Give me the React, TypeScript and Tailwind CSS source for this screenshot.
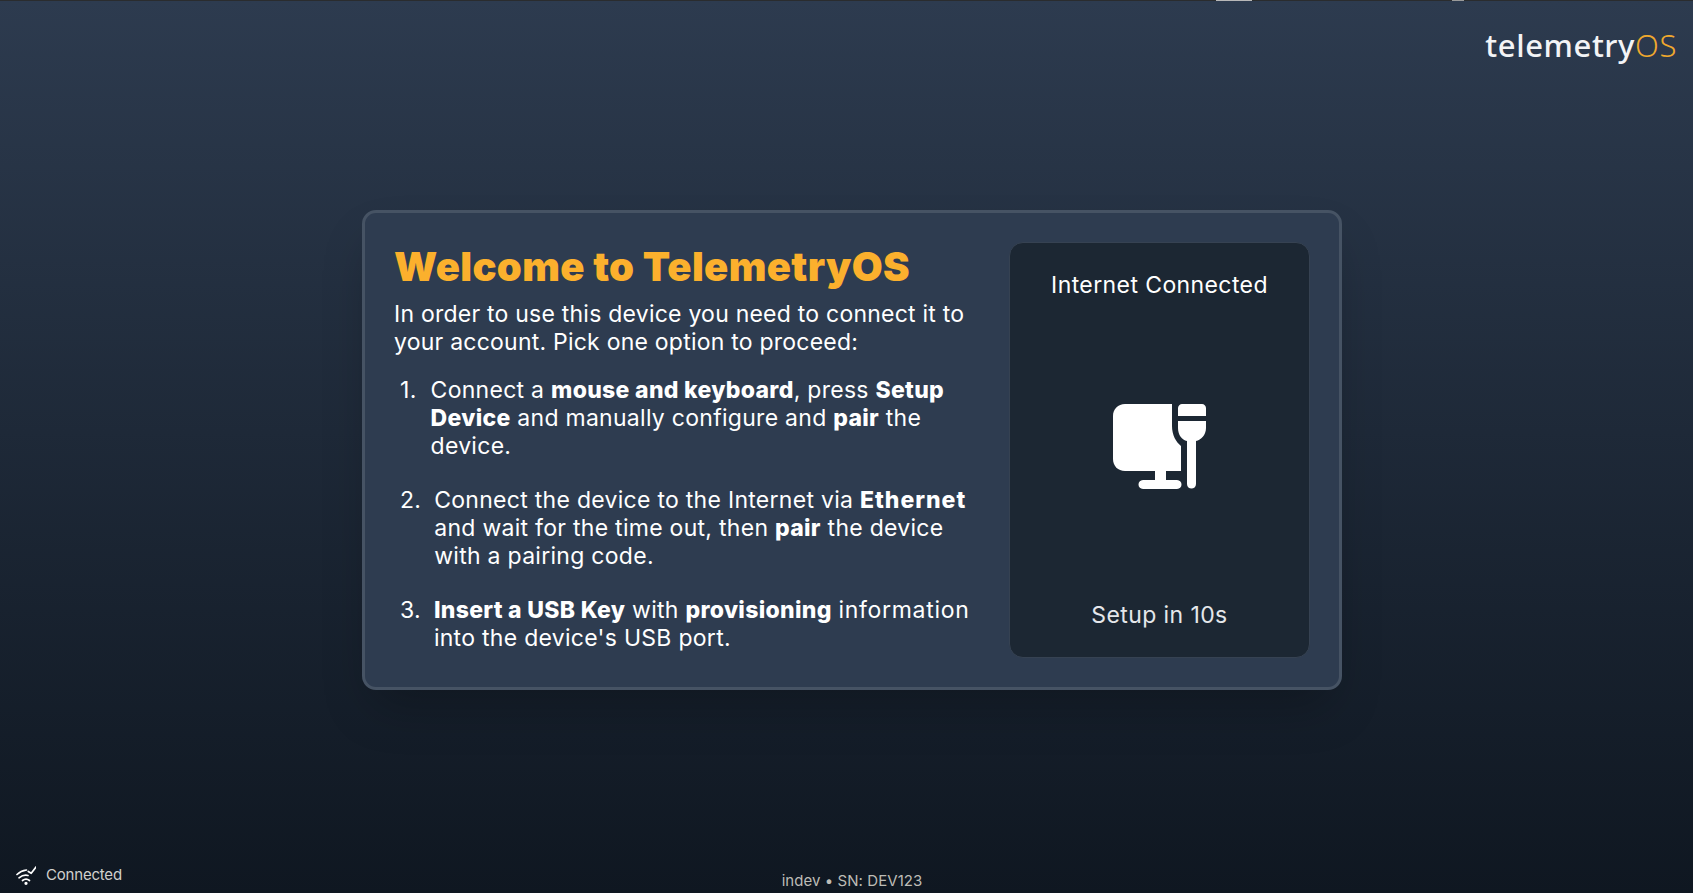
export default function App() {
  const sans = "font-['Inter','Noto_Sans',sans-serif]";
  const B = ({ children }: { children: string }) => <b className="font-extrabold tracking-[0.3px]">{children}</b>;
  return (
    <div className={`relative flex h-[893px] w-full flex-col overflow-hidden bg-gradient-to-b from-[#2d3b4f] to-[#0f1721] text-white ${sans}`}>
      <div className="flex h-px shrink-0 bg-[#2a2c2e]">
        <div className="ml-[1216px] h-px w-[36px] bg-[#b8b8b8]" />
        <div className="ml-[200px] h-px w-[12px] bg-[#9a9a9a]" />
      </div>
      <div className="absolute right-[16px] top-[23px] font-['Noto_Sans',sans-serif] text-[31px] leading-[44px] font-medium tracking-[0.6px] text-[#f3f4f6]">
        telemetry<span className="font-light text-[#f0a92e]">OS</span>
      </div>
      <div className="flex flex-1 items-center justify-center pt-[5px] pl-[11px]">
        <div className="flex h-[480px] w-[980px] gap-[29px] rounded-[14px] border-[3px] border-[#465364] bg-[#2e3c50] py-[29px] pl-[29px] pr-[29px] shadow-2xl">
          <div className="flex-1">
            <h1 className="pt-[2px] text-[40px] leading-[46px] font-black tracking-[0.33px] text-[#fbb02d]">Welcome to TelemetryOS</h1>
            <p className="mt-[10px] text-[23px] leading-[28px] tracking-[0.23px]">In order to use this device you need to connect it to your account. Pick one option to proceed:</p>
            <ol className="mt-[20px] flex flex-col gap-[26px] text-[23px] leading-[28px] tracking-[0.28px]">
              <li className="flex gap-[14px] pl-[6px]"><span>1.</span><span>Connect a <B>mouse and keyboard</B>, press <B>Setup Device</B> and manually configure and <B>pair</B> the device.</span></li>
              <li className="flex gap-[13px] pl-[6px]"><span>2.</span><span>Connect the device to the Internet via <b className="font-extrabold tracking-[1px]">Ethernet</b> and wait for the time out, then <B>pair</B> the device with a pairing code.</span></li>
              <li className="flex gap-[13px] pl-[6px]"><span>3.</span><span><B>Insert a USB Key</B> with <B>provisioning</B> <span className="tracking-[0.7px]">information</span> into the device's USB port.</span></li>
            </ol>
          </div>
          <div className="flex w-[301px] shrink-0 flex-col items-center justify-between rounded-[14px] border border-[#364252] bg-[#1c2733] pt-[28px] pb-[28px]">
            <div className="text-[23px] leading-[28px] tracking-[0.4px]">Internet Connected</div>
            <svg className="mb-[6px]" width="94" height="85" viewBox="0 0 94 85" fill="white">
              <path d="M12 0H59V22C59 31 63 38 68 42V67H53V76H64C70 76 70 85 64 85H30C24 85 24 76 30 76H42V67H12C5 67 0 62 0 55V12C0 5 5 0 12 0Z" />
              <path d="M65 12V4C65 2 67 0 69 0H89C91 0 93 2 93 4V12Z" />
              <path d="M65 17H93V24C93 31 88 36 83 37V80C83 86 74 86 74 80V37C69 36 65 31 65 24Z" />
            </svg>
            <div className="text-[23px] leading-[28px] tracking-[0.4px] text-[#e5e7eb]">Setup in 10s</div>
          </div>
        </div>
      </div>
      <div className="absolute bottom-[8px] left-[16px] flex items-center gap-[10px] text-[15px] leading-[20px] tracking-[-0.2px] text-[#d1d0cc]">
        <svg width="20" height="20" viewBox="0 0 20 20" fill="none" stroke="white" strokeWidth="1.7" strokeLinecap="round" strokeLinejoin="round">
          <path d="M1 9.5C3.5 7 7 5.5 10.5 5" />
          <path d="M3 12.8C6 10.5 10 10 12 10.5" />
          <path d="M6.5 15.5C8.5 14 11.5 14 13.5 15.5" />
          <path d="M12.3 6.5L15.2 8.3L20 2" />
          <circle cx="10" cy="18.3" r="0.8" fill="white" />
        </svg>
        <span>Connected</span>
      </div>
      <div className="absolute bottom-[2px] left-0 right-0 pl-[11px] text-center text-[15px] leading-[20px] tracking-[0.06px] text-[#bdbcb6]">indev • SN: DEV123</div>
    </div>
  );
}
